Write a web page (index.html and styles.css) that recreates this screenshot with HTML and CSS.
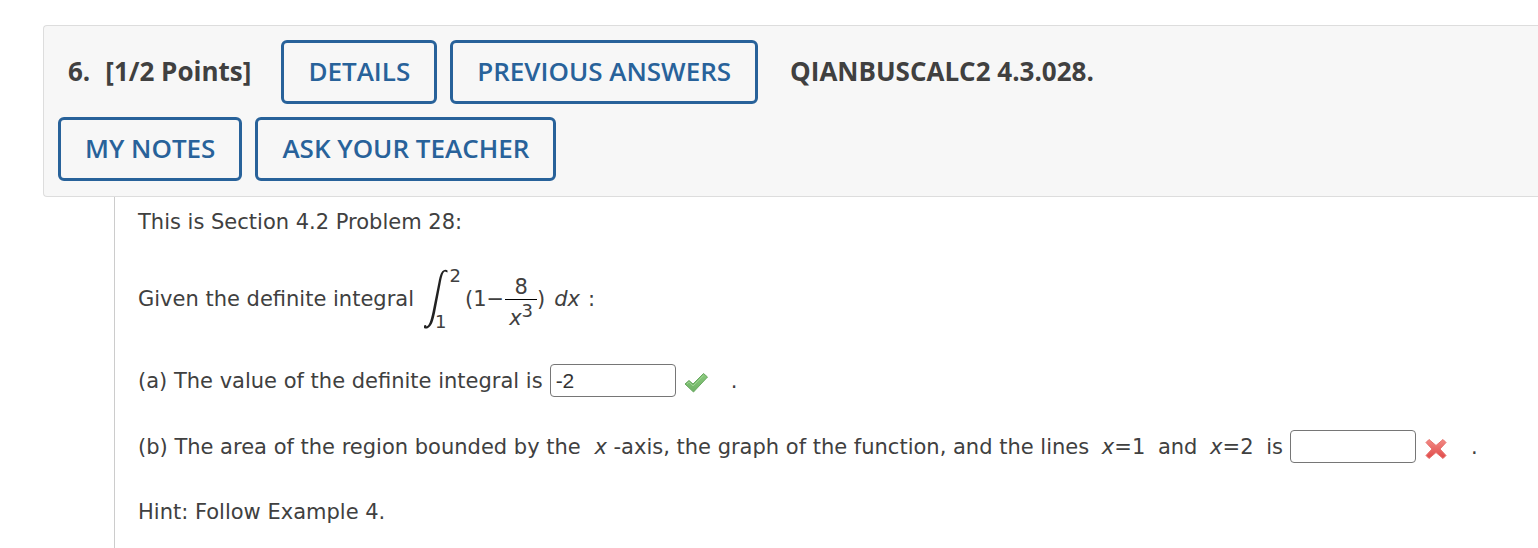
FILE: index.html
```html
<!DOCTYPE html>
<html lang="en">
<head>
<meta charset="utf-8">
<title>Question 6</title>
<link rel="stylesheet" href="styles.css">
</head>
<body>
<main class="question">
  <header class="header">
    <div class="header-row">
      <h2 class="points"><span>6.</span><span>[1/2 Points]</span></h2>
      <button class="btn" type="button">DETAILS</button>
      <button class="btn" type="button">PREVIOUS ANSWERS</button>
      <strong class="code">QIANBUSCALC2 4.3.028.</strong>
    </div>
    <div class="header-row">
      <button class="btn" type="button">MY NOTES</button>
      <button class="btn" type="button">ASK YOUR TEACHER</button>
    </div>
  </header>
  <section class="body">
    <p class="line">This is Section 4.2 Problem 28:</p>
    <div class="line line-math">
      <span>Given the definite integral</span>
      <span class="math">
        <span class="integral">
          <svg class="integral-sign" viewBox="0 0 24 60" width="24" height="60" aria-hidden="true"><path d="M23.500 3.500L23.500 1.500Q22 0.500 20.500 1C17 2 16 6 14.500 13L8.500 43C6.500 52 5 57 2.500 57.500L2 56L0 56.500V59Q2 60 4 59C8 57 9.500 51 11 44L16.500 15C18 7 19 3 21 2.500Z" fill="#222"/></svg>
          <span class="limits"><span class="upper">2</span><span class="lower">1</span></span>
        </span>
        <span>(1</span><span class="minus">−</span>
        <span class="fraction"><span class="num">8</span><span class="den"><i>x</i><span class="exp">3</span></span></span>
        <span>)</span>
        <i class="dx">dx</i>
        <span class="colon">:</span>
      </span>
    </div>
    <div class="line">
      <label for="a">(a) The value of the definite integral is</label>
      <input class="answer" id="a" type="text" value="-2">
      <svg class="mark" viewBox="0 0 24 22" width="24" height="22" role="img" aria-label="Correct">
        <defs><linearGradient id="g" x2="0" y2="1"><stop stop-color="#8ac97c"/><stop offset="1" stop-color="#6fb266"/></linearGradient></defs>
        <path d="M1 12L5 8.500L9 12L19.500 1.500L23.500 5L9.500 20Z" fill="url(#g)" stroke="#68a760" stroke-width="1" stroke-linejoin="round"/>
        <path d="M3 12L5 10L9 14L19.500 3.500" fill="none" stroke="#9bd190" stroke-width="1"/>
      </svg>
      <span class="stop">.</span>
    </div>
    <div class="line">
      <label for="b">(b) The area of the region bounded by the <i class="var">x</i> -axis, the graph of the function, and the lines <span class="eq"><i>x</i>=1</span> and <span class="eq"><i>x</i>=2</span> is</label>
      <input class="answer" id="b" type="text">
      <svg class="mark" viewBox="0 0 24 22" width="24" height="22" role="img" aria-label="Incorrect">
        <defs><linearGradient id="r" x2="0" y2="1"><stop stop-color="#f28a84"/><stop offset="1" stop-color="#e04a4a"/></linearGradient></defs>
        <path d="M2 4.500L5 1.500L12 7.500L19 1.500L22 4.500L16 11L22 17.500L19 20.500L12 14.500L5 20.500L2 17.500L8 11Z" fill="url(#r)" stroke="#e8716d" stroke-width="1" stroke-linejoin="round"/>
      </svg>
      <span class="stop">.</span>
    </div>
    <p class="line">Hint: Follow Example 4.</p>
  </section>
</main>
</body>
</html>
```
FILE: styles.css
```css
* { box-sizing: border-box; }
body {
  margin: 0;
  background: #fff;
  color: #404040;
  font-family: "DejaVu Sans", Verdana, sans-serif;
  font-size: 21px;
  line-height: 32px;
  overflow: hidden;
}
.question { padding: 25px 0 0 43px; }
.header {
  display: flex;
  flex-direction: column;
  gap: 13px;
  padding: 14px 14px 15px;
  background: #f7f7f7;
  border: 1px solid #ddd;
  border-right: 0;
  border-radius: 4px 0 0 4px;
  font-family: "Open Sans", sans-serif;
  font-size: 26px;
}
.header-row { display: flex; align-items: center; gap: 13px; }
.points {
  display: flex;
  gap: 15px;
  margin: 0 17px 0 10px;
  padding-bottom: 2px;
  font-size: 26px;
  font-weight: 700;
}
.code { margin-left: 19px; padding-bottom: 2px; }
.btn {
  height: 64px;
  padding: 0 24px 2px;
  background: transparent;
  border: 3px solid #28629a;
  border-radius: 6px;
  color: #28629a;
  font-family: inherit;
  font-size: 26px;
  font-weight: 600;
}
.body {
  display: flex;
  flex-direction: column;
  gap: 33px;
  margin-left: 71px;
  padding: 9px 0 40px 23px;
  border-left: 1px solid #ccc;
}
.line { display: flex; align-items: center; margin: 0; white-space: nowrap; }
.line-math { height: 56px; margin-bottom: 4px; }
.math { display: flex; align-items: center; margin-left: 10px; }
.integral { display: flex; align-items: center; margin-right: 4px; }
.limits {
  display: flex;
  flex-direction: column;
  justify-content: space-between;
  height: 66px;
  width: 26px;
  margin-left: -13px;
  font-size: 18px;
  line-height: 20px;
}
.upper { align-self: flex-end; }
.minus { margin-right: 1px; }
.fraction { display: flex; flex-direction: column; align-items: center; }
.num { line-height: 24px; }
.den { height: 24px; padding: 0 4px; border-top: 1px solid #000; line-height: 36px; }
.exp { font-size: 18px; vertical-align: 8px; line-height: 12px; }
.dx { margin: 0 8px 0 9px; }
.answer {
  width: 126px;
  height: 33px;
  margin: 0 8px 0 7px;
  padding: 0 5px;
  border: 1px solid #767676;
  border-radius: 4px;
  background: #fff;
  color: #333;
  font-family: "Liberation Sans", sans-serif;
  font-size: 21px;
}
.line:has(.answer) { height: 33px; }
.mark { margin-top: 5px; }
.stop { margin-left: 23px; }
.var { margin-left: 7px; }
.eq { margin: 0 6px; }
```
